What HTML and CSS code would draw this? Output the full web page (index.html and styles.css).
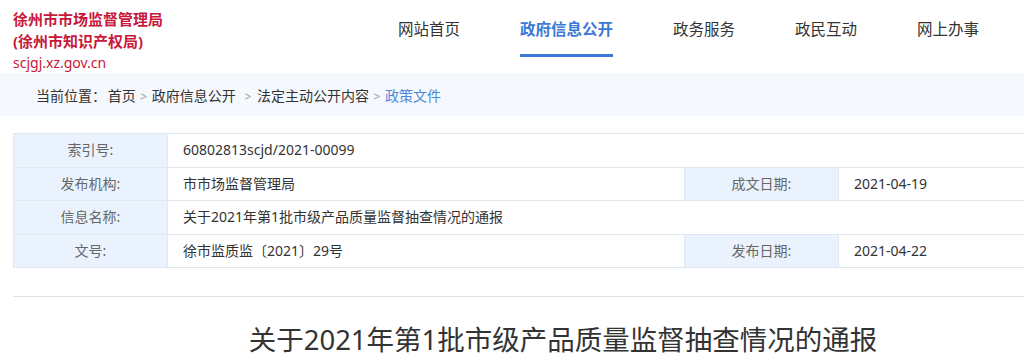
FILE: index.html
```html
<!DOCTYPE html>
<html lang="zh-CN">

<head>
    <title>关于2021年第1批市级产品质量监督抽查情况的通报</title>
    <meta charset="utf-8">
    <meta name="viewport" content="width=device-width, initial-scale=1">
    <link rel="stylesheet" href="styles.css">
</head>

<body>
    <header class="top">
        <div class="logo">
            <div class="logo-name">徐州市市场监督管理局</div>
            <div class="logo-name">(徐州市知识产权局)</div>
            <div class="logo-url">scjgj.xz.gov.cn</div>
        </div>
        <nav class="menu">
            <a href="#">网站首页</a>
            <a href="#" class="active">政府信息公开</a>
            <a href="#">政务服务</a>
            <a href="#">政民互动</a>
            <a href="#">网上办事</a>
        </nav>
    </header>

    <div class="crumbs">
        <span class="crumbs-label">当前位置：</span>
        <a href="#">首页</a>
        <span class="sep">&gt;</span>
        <a href="#">政府信息公开</a>
        <span class="sep wide">&gt;</span>
        <a href="#">法定主动公开内容</a>
        <span class="sep">&gt;</span>
        <a href="#" class="current">政策文件</a>
    </div>

    <section class="wrap">
        <table class="meta">
            <colgroup>
                <col class="col-label">
                <col class="col-value">
                <col class="col-label">
                <col class="col-rest">
            </colgroup>
            <tr>
                <th>索引号:</th>
                <td colspan="3">60802813scjd/2021-00099</td>
            </tr>
            <tr>
                <th>发布机构:</th>
                <td>市市场监督管理局</td>
                <th>成文日期:</th>
                <td>2021-04-19</td>
            </tr>
            <tr>
                <th>信息名称:</th>
                <td colspan="3">关于2021年第1批市级产品质量监督抽查情况的通报</td>
            </tr>
            <tr>
                <th>文号:</th>
                <td>徐市监质监〔2021〕29号</td>
                <th>发布日期:</th>
                <td>2021-04-22</td>
            </tr>
        </table>

        <hr class="divider">

        <h1 class="title">关于2021年第1批市级产品质量监督抽查情况的通报</h1>
    </section>
</body>

</html>
```

FILE: styles.css
```css
* {
    box-sizing: border-box;
}

html,
body {
    overflow-x: hidden;
}

body {
    margin: 0;
    font-family: "Noto Sans", "Noto Sans CJK SC", sans-serif;
    color: #333;
    background: #fff;
}

a {
    color: inherit;
    text-decoration: none;
}

/* Header with logo and menu */
.top {
    display: flex;
    height: 73px;
    padding-left: 13px;
}

.logo {
    width: 385px;
    padding-top: 8px;
}

.logo-name {
    font-size: 15px;
    line-height: 22px;
    font-weight: bold;
    color: #c8173a;
}

.logo-url {
    font-size: 14px;
    line-height: 22px;
    color: #c8173a;
}

.menu {
    display: flex;
    gap: 60px;
}

.menu a {
    padding-top: 18px;
    padding-bottom: 14px;
    font-size: 15.5px;
    line-height: 22px;
    color: #333;
    border-bottom: 3px solid transparent;
    align-self: flex-start;
}

.menu a.active {
    color: #3c78d6;
    font-weight: bold;
    border-bottom-color: #3c78d6;
}

/* Breadcrumb bar */
.crumbs {
    height: 43px;
    line-height: 45px;
    padding-left: 36px;
    background: #f5f8fc;
    font-size: 14px;
    color: #333;
}

.crumbs-label {
    margin-right: -2px;
}

.sep {
    margin: 0 1px;
    font-size: 12px;
    color: #999;
}

.sep.wide {
    margin: 0 2px 0 5px;
}

.crumbs .current {
    color: #4f86db;
}

/* Document info table */
.wrap {
    width: 1100px;
    margin: 17px 0 0 13px;
}

.meta {
    width: 100%;
    border-collapse: collapse;
    font-size: 14px;
}

.col-label {
    width: 154px;
}

.col-value {
    width: 517px;
}

.meta th,
.meta td {
    height: 33.5px;
    padding: 0 15px;
    border: 1px solid #dfe7f0;
    line-height: 20px;
}

.meta th {
    background: #eaf3fd;
    color: #666;
    font-weight: normal;
    text-align: center;
}

.meta td {
    color: #333;
    text-align: left;
}

.divider {
    margin: 28px 0 0;
    border: 0;
    border-top: 1px solid #dce4ea;
}

.title {
    margin: 23px 0 0;
    font-size: 27.5px;
    line-height: 40px;
    font-weight: normal;
    text-align: center;
    color: #333;
}
```
